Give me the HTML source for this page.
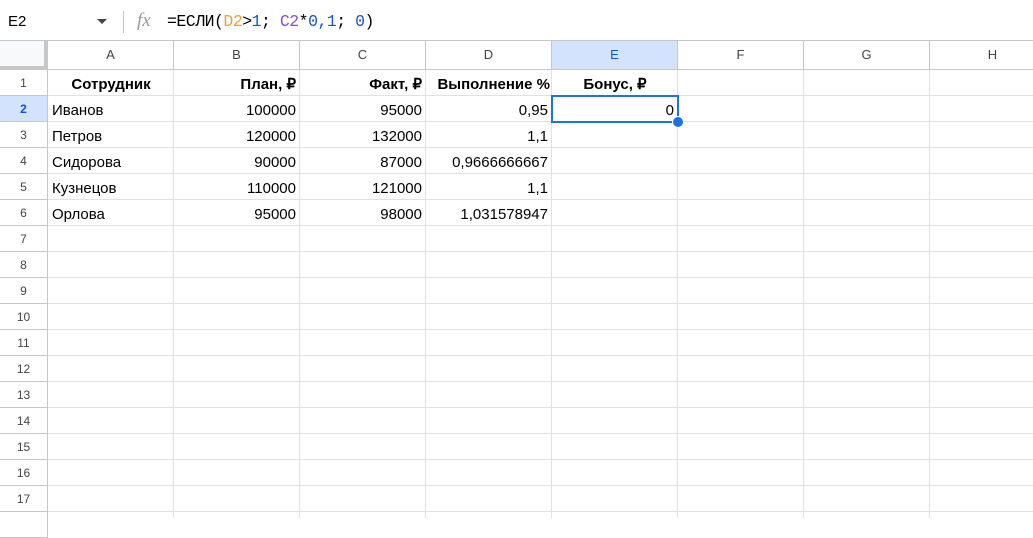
<!DOCTYPE html>
<html><head><meta charset="utf-8"><style>
*{margin:0;padding:0;box-sizing:border-box}
body{width:1033px;height:518px;overflow:hidden;background:#fff;font-family:"Liberation Sans",Arial,sans-serif;position:relative;color:#000}
.fb{position:absolute;left:0;top:0;width:1033px;height:41px;border-bottom:1px solid #c7c7c7;background:#fff}
.grid{position:absolute;left:48px;top:70px;width:985px;height:448px;
background-image:repeating-linear-gradient(to right,transparent 0 125px,#e1e1e1 125px 126px),repeating-linear-gradient(to bottom,transparent 0 25px,#e1e1e1 25px 26px)}
.ch{position:absolute;top:41px;height:29px;border-right:1px solid #c7c7c7;border-bottom:1px solid #c7c7c7;font-size:13px;color:#444;text-align:center;line-height:28px;background:#fff}
.rh{position:absolute;left:0;width:48px;height:26px;border-right:1px solid #c7c7c7;border-bottom:1px solid #c7c7c7;font-size:12px;color:#444;text-align:center;line-height:27px;background:#fff}
.c{position:absolute;height:26px;line-height:30px;font-size:15px;padding:0 4px;white-space:nowrap;overflow:hidden}
.r{text-align:right}.b{font-weight:bold;text-align:center}
</style></head><body>
<div class="fb">
<div style="position:absolute;left:8px;top:13px;font-size:15px">E2</div>
<div style="position:absolute;left:97px;top:19px;width:0;height:0;border-left:5px solid transparent;border-right:5px solid transparent;border-top:5px solid #444"></div>
<div style="position:absolute;left:123px;top:11px;width:1px;height:22px;background:#c7c7c7"></div>
<div style="position:absolute;left:137px;top:10px;font-size:19px;font-style:italic;font-family:'Liberation Serif',serif;color:#999">fx</div>
<div style="position:absolute;left:167px;top:12px;font-size:16.5px;font-family:'Liberation Mono',monospace;letter-spacing:-0.5px">=ЕСЛИ(<span style="color:#e8a33a">D2</span>&gt;<span style="color:#1a55c9">1</span>; <span style="color:#8e4ec6">C2</span>*<span style="color:#1a55c9">0,1</span>; <span style="color:#1a55c9">0</span>)</div>
</div>
<div class="grid"></div>
<div style="position:absolute;left:0;top:41px;width:48px;height:29px;background:#f8f9fa;border-right:4px solid #c7c7c7;border-bottom:4px solid #c7c7c7"></div>
<div class="ch" style="left:48px;width:126px">A</div>
<div class="ch" style="left:174px;width:126px">B</div>
<div class="ch" style="left:300px;width:126px">C</div>
<div class="ch" style="left:426px;width:126px">D</div>
<div class="ch" style="left:552px;width:126px;background:#d3e3fd;color:#0b57d0">E</div>
<div class="ch" style="left:678px;width:126px">F</div>
<div class="ch" style="left:804px;width:126px">G</div>
<div class="ch" style="left:930px;width:126px">H</div>
<div class="rh" style="top:70px">1</div>
<div class="rh" style="top:96px;background:#d3e3fd;color:#0b57d0;font-weight:bold">2</div>
<div class="rh" style="top:122px">3</div>
<div class="rh" style="top:148px">4</div>
<div class="rh" style="top:174px">5</div>
<div class="rh" style="top:200px">6</div>
<div class="rh" style="top:226px">7</div>
<div class="rh" style="top:252px">8</div>
<div class="rh" style="top:278px">9</div>
<div class="rh" style="top:304px">10</div>
<div class="rh" style="top:330px">11</div>
<div class="rh" style="top:356px">12</div>
<div class="rh" style="top:382px">13</div>
<div class="rh" style="top:408px">14</div>
<div class="rh" style="top:434px">15</div>
<div class="rh" style="top:460px">16</div>
<div class="rh" style="top:486px">17</div>
<div class="rh" style="top:512px"></div>

<div class="c b" style="left:48px;top:70px;width:126px">Сотрудник</div>
<div class="c b r" style="left:174px;top:70px;width:126px;text-align:right">План, ₽</div>
<div class="c b r" style="left:300px;top:70px;width:126px;text-align:right">Факт, ₽</div>
<div class="c b" style="left:426px;top:70px;width:126px;text-align:right;padding-right:2px">Выполнение %</div>
<div class="c b" style="left:552px;top:70px;width:126px">Бонус, ₽</div>

<div class="c" style="left:48px;top:96px;width:126px">Иванов</div>
<div class="c r" style="left:174px;top:96px;width:126px">100000</div>
<div class="c r" style="left:300px;top:96px;width:126px">95000</div>
<div class="c r" style="left:426px;top:96px;width:126px">0,95</div>
<div class="c r" style="left:552px;top:96px;width:126px">0</div>

<div class="c" style="left:48px;top:122px;width:126px">Петров</div>
<div class="c r" style="left:174px;top:122px;width:126px">120000</div>
<div class="c r" style="left:300px;top:122px;width:126px">132000</div>
<div class="c r" style="left:426px;top:122px;width:126px">1,1</div>

<div class="c" style="left:48px;top:148px;width:126px">Сидорова</div>
<div class="c r" style="left:174px;top:148px;width:126px">90000</div>
<div class="c r" style="left:300px;top:148px;width:126px">87000</div>
<div class="c r" style="left:426px;top:148px;width:126px">0,9666666667</div>

<div class="c" style="left:48px;top:174px;width:126px">Кузнецов</div>
<div class="c r" style="left:174px;top:174px;width:126px">110000</div>
<div class="c r" style="left:300px;top:174px;width:126px">121000</div>
<div class="c r" style="left:426px;top:174px;width:126px">1,1</div>

<div class="c" style="left:48px;top:200px;width:126px">Орлова</div>
<div class="c r" style="left:174px;top:200px;width:126px">95000</div>
<div class="c r" style="left:300px;top:200px;width:126px">98000</div>
<div class="c r" style="left:426px;top:200px;width:126px">1,031578947</div>

<div style="position:absolute;left:551px;top:95px;width:128px;height:28px;border:2px solid #1a73e8"></div>
<div style="position:absolute;left:672px;top:116px;width:12px;height:12px;border-radius:50%;background:#1a73e8;border:1px solid #fff"></div>
</body></html>
